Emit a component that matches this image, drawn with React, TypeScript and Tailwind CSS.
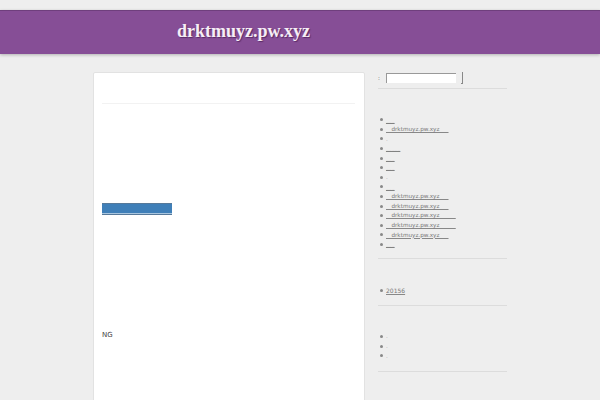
const links = [
	{ text: "___" },
	{ text: "   drktmuyz.pw.xyz     " },
	{ text: ".", plain: true },
	{ text: "_____" },
	{ text: "___" },
	{ text: "___" },
	{ text: ".", plain: true },
	{ text: "___" },
	{ text: "   drktmuyz.pw.xyz     " },
	{ text: "   drktmuyz.pw.xyz     " },
	{ text: "   drktmuyz.pw.xyz         " },
	{ text: "   drktmuyz.pw.xyz         " },
	{ text: "   drktmuyz.pw.xyz     " },
	{ text: "___" },
];

function Bullet({ children }: { children?: React.ReactNode }) {
	return (
		<li className="flex h-[9.6px] items-center">
			<span className="mr-[3.5px] ml-[1.5px] size-[3px] shrink-0 rounded-full bg-[#888]" />
			{children}
		</li>
	);
}

function Divider({ className }: { className: string }) {
	return <div className={`h-px w-[129px] bg-[#dcdcdc] ${className}`} />;
}

export default function App() {
	return (
		<div className="h-[400px] w-[600px] overflow-hidden bg-[#eeeeee] pt-[10px] font-['DejaVu_Sans',sans-serif] text-[#777]">
			<header className="flex h-[44px] items-center border-t border-[#6f3f7d] bg-[#864e96] pl-[177px] shadow-[0_1px_3px_rgba(0,0,0,0.25)]">
				<h1 className="pb-[3px] font-['Liberation_Serif',serif] text-[18px] font-bold text-[#f6eef6] [text-shadow:1px_1px_1px_rgba(60,20,70,0.6)]">
					drktmuyz.pw.xyz
				</h1>
			</header>
			<div className="mt-[18px] flex pl-[93px]">
				<main className="h-[340px] w-[272px] rounded-t-[2px] border border-[#e2e2e2] bg-white px-[8px] pt-[30px]">
					<div className="h-px w-[253px] bg-[#f2f2f2]" />
					<div className="mt-[99px] h-[12px] w-[70px] border-y border-[#56799a] bg-[#3f7fb8] shadow-[inset_0_-1px_0_#a9c6df]" />
					<p className="mt-[115px] text-[7px] leading-[10px] text-[#444]">NG</p>
				</main>
				<aside className="ml-[13px] w-[129px] text-[5.7px]">
					<div className="flex h-[12px] items-center">
						<span className="w-[8px] text-[#666]">:</span>
						<div className="h-[10px] w-[70px] border-t border-l border-[#999] bg-white" />
						<div className="ml-[5px] h-[12px] w-[2px] border-r border-b border-[#888]" />
					</div>
					<Divider className="mt-[4px]" />
					<ul className="mt-[26px]">
						{links.map((link, i) => (
							<Bullet key={i}>
								<span className={`whitespace-pre ${link.plain ? "text-[#aaa]" : "underline decoration-[#888]"}`}>{link.text}</span>
							</Bullet>
						))}
					</ul>
					<Divider className="mt-[9px]" />
					<ul className="mt-[26px]">
						<Bullet><span className="text-[6px] underline decoration-[#888]">20156</span></Bullet>
					</ul>
					<Divider className="mt-[10px]" />
					<ul className="mt-[26px]">
						<Bullet><span className="text-[#aaa]">.</span></Bullet>
						<Bullet><span className="text-[#aaa]">.</span></Bullet>
						<Bullet><span className="text-[#aaa]">.</span></Bullet>
					</ul>
					<Divider className="mt-[10px]" />
				</aside>
			</div>
		</div>
	);
}
